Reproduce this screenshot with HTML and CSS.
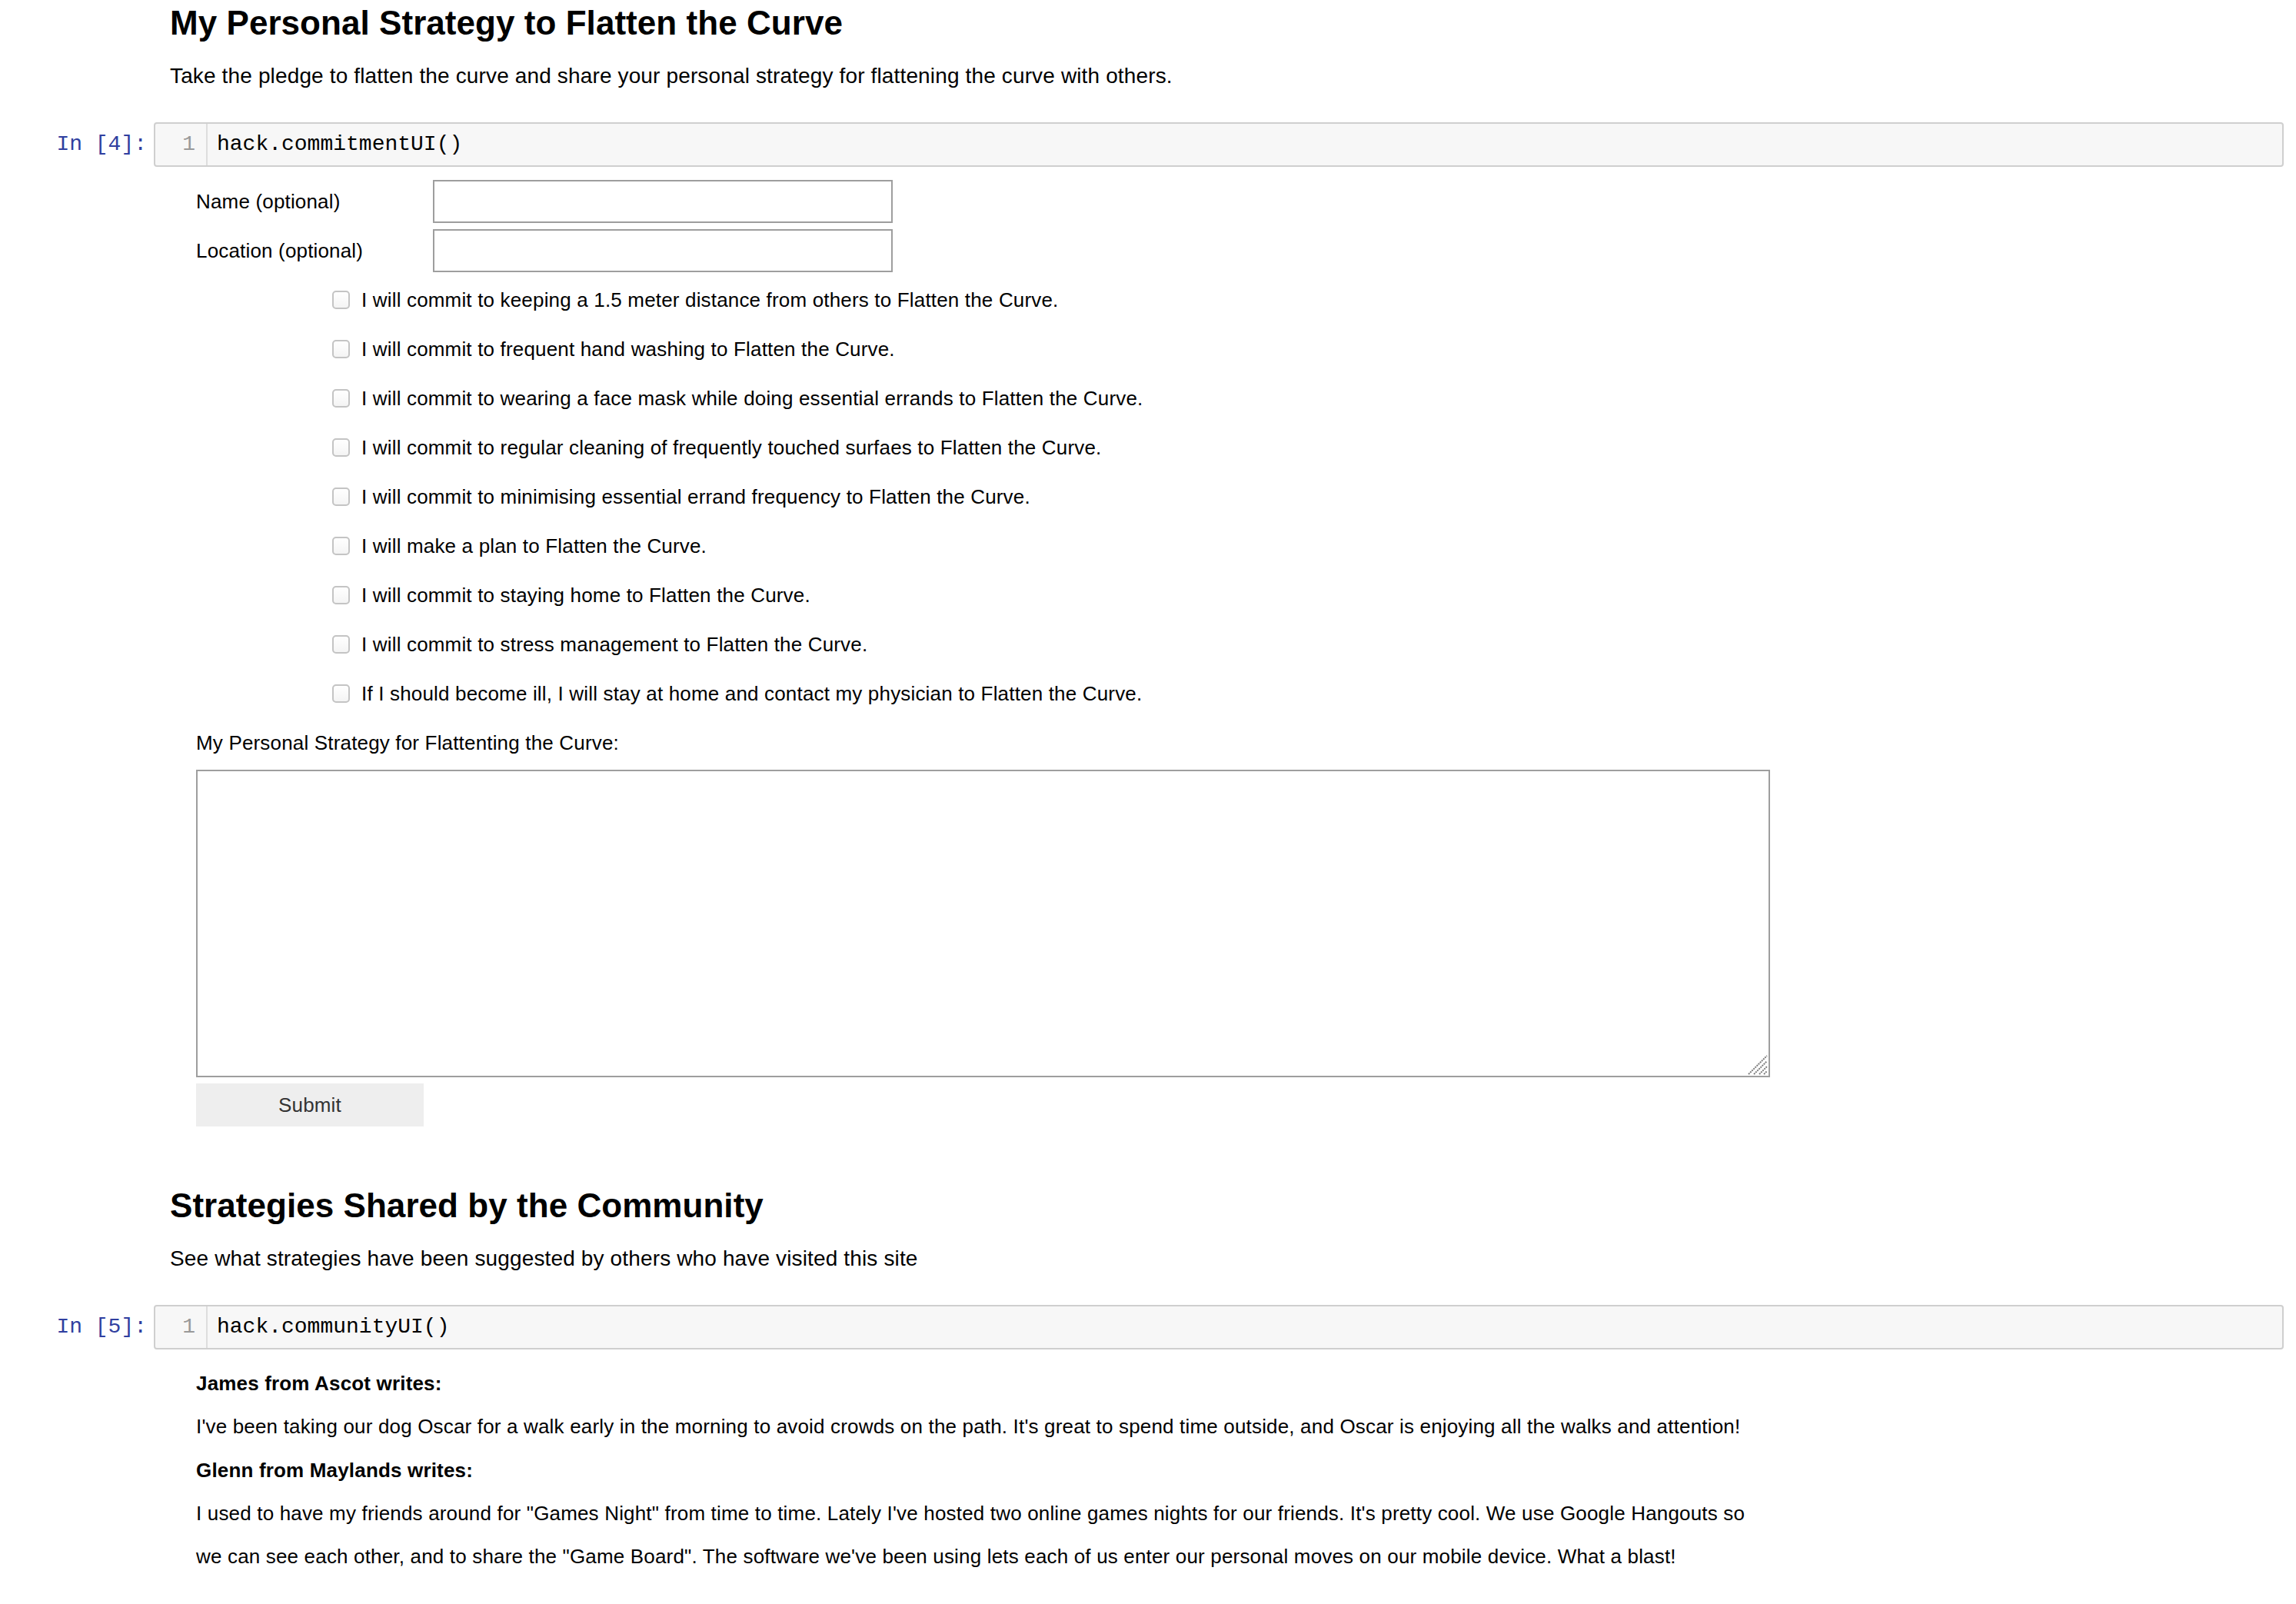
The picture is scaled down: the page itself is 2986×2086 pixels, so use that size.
FILE: index.html
```html
<!DOCTYPE html>
<html lang="en">
<head>
<meta charset="utf-8">
<title>Flatten the Curve</title>
<link rel="stylesheet" href="styles.css">
</head>
<body>
<div class="notebook">
  <section class="md">
    <h2>My Personal Strategy to Flatten the Curve</h2>
    <p class="lead">Take the pledge to flatten the curve and share your personal strategy for flattening the curve with others.</p>
  </section>

  <div class="code-cell">
    <div class="prompt">In&nbsp;[4]:</div>
    <div class="input">
      <div class="gutter">1</div>
      <div class="code">hack.commitmentUI()</div>
    </div>
  </div>

  <div class="output">
    <div class="row">
      <label class="label">Name (optional)</label>
      <input class="text-input" type="text">
    </div>
    <div class="row">
      <label class="label">Location (optional)</label>
      <input class="text-input" type="text">
    </div>
    <label class="row check-row"><input class="check" type="checkbox"><span>I will commit to keeping a 1.5 meter distance from others to Flatten the Curve.</span></label>
    <label class="row check-row"><input class="check" type="checkbox"><span>I will commit to frequent hand washing to Flatten the Curve.</span></label>
    <label class="row check-row"><input class="check" type="checkbox"><span>I will commit to wearing a face mask while doing essential errands to Flatten the Curve.</span></label>
    <label class="row check-row"><input class="check" type="checkbox"><span>I will commit to regular cleaning of frequently touched surfaes to Flatten the Curve.</span></label>
    <label class="row check-row"><input class="check" type="checkbox"><span>I will commit to minimising essential errand frequency to Flatten the Curve.</span></label>
    <label class="row check-row"><input class="check" type="checkbox"><span>I will make a plan to Flatten the Curve.</span></label>
    <label class="row check-row"><input class="check" type="checkbox"><span>I will commit to staying home to Flatten the Curve.</span></label>
    <label class="row check-row"><input class="check" type="checkbox"><span>I will commit to stress management to Flatten the Curve.</span></label>
    <label class="row check-row"><input class="check" type="checkbox"><span>If I should become ill, I will stay at home and contact my physician to Flatten the Curve.</span></label>
    <div class="row">My Personal Strategy for Flattenting the Curve:</div>
    <div class="textarea-wrap">
      <textarea class="strategy"></textarea>
      <svg class="grip" width="26" height="26" viewBox="0 0 26 26" aria-hidden="true">
        <g stroke="#7a7a7a" stroke-width="2" stroke-dasharray="2 1">
          <line x1="1" y1="25" x2="25" y2="1"/>
          <line x1="8" y1="25" x2="25" y2="8"/>
          <line x1="15" y1="25" x2="25" y2="15"/>
          <line x1="21" y1="25" x2="25" y2="21"/>
        </g>
      </svg>
    </div>
    <button class="submit" type="button">Submit</button>
  </div>

  <section class="md md-second">
    <h2>Strategies Shared by the Community</h2>
    <p class="lead">See what strategies have been suggested by others who have visited this site</p>
  </section>

  <div class="code-cell">
    <div class="prompt">In&nbsp;[5]:</div>
    <div class="input">
      <div class="gutter">1</div>
      <div class="code">hack.communityUI()</div>
    </div>
  </div>

  <div class="community">
    <p class="author">James from Ascot writes:</p>
    <p>I've been taking our dog Oscar for a walk early in the morning to avoid crowds on the path. It's great to spend time outside, and Oscar is enjoying all the walks and attention!</p>
    <p class="author">Glenn from Maylands writes:</p>
    <p>I used to have my friends around for "Games Night" from time to time. Lately I've hosted two online games nights for our friends. It's pretty cool. We use Google Hangouts so we can see each other, and to share the "Game Board". The software we've been using lets each of us enter our personal moves on our mobile device. What a blast!</p>
  </div>
</div>
</body>
</html>
```

FILE: styles.css
```css
html, body {
  margin: 0;
  background: #ffffff;
}

body {
  padding: 3px 16px 0 0;
  font-family: "Liberation Sans", Arial, Helvetica, sans-serif;
  color: #000000;
}

.md {
  padding-left: 221px;
}

.md-second {
  margin-top: 76px;
}

.md h2 {
  margin: 0;
  font-size: 44px;
  line-height: 53px;
  font-weight: bold;
  letter-spacing: 0.05px;
}

.lead {
  margin: 23px 0 0;
  font-size: 28px;
  line-height: 40px;
  letter-spacing: 0.14px;
}

.code-cell {
  display: flex;
  align-items: center;
  margin-top: 40px;
}

.prompt {
  width: 200px;
  box-sizing: border-box;
  padding-right: 9px;
  text-align: right;
  font-family: "Liberation Mono", "Courier New", monospace;
  font-size: 28px;
  line-height: 58px;
  color: #303f9f;
}

.input {
  flex: 1;
  display: flex;
  height: 58px;
  box-sizing: border-box;
  border: 2px solid #cfcfcf;
  border-radius: 4px;
  background: #f7f7f7;
  font-family: "Liberation Mono", "Courier New", monospace;
  font-size: 28px;
  line-height: 54px;
}

.gutter {
  width: 68px;
  box-sizing: border-box;
  border-right: 2px solid #dddddd;
  padding-right: 14px;
  text-align: right;
  color: #999999;
}

.code {
  padding-left: 12px;
  color: #000000;
}

.output {
  margin-top: 13px;
  padding-left: 255px;
  font-size: 26px;
  letter-spacing: 0.17px;
}

.row {
  height: 64px;
  display: flex;
  align-items: center;
}

.label {
  width: 308px;
  flex: none;
}

.text-input {
  width: 598px;
  height: 56px;
  box-sizing: border-box;
  margin: 0;
  padding: 0 8px;
  border: 2px solid #9e9e9e;
  border-radius: 0;
  background: #ffffff;
  font: inherit;
  outline: none;
}

.check-row {
  padding-left: 177px;
}

.check {
  appearance: none;
  -webkit-appearance: none;
  width: 23px;
  height: 24px;
  margin: 0 15px 0 0;
  box-sizing: border-box;
  border: 2px solid #c4c4c4;
  border-radius: 5px;
  background: linear-gradient(#ffffff, #f4f4f4);
  flex: none;
}

.textarea-wrap {
  position: relative;
  width: 2047px;
  height: 400px;
  margin: 3px 0 0 0;
}

.strategy {
  display: block;
  width: 100%;
  height: 100%;
  box-sizing: border-box;
  margin: 0;
  border: 2px solid #9e9e9e;
  border-radius: 0;
  resize: none;
  outline: none;
  font: inherit;
  background: #ffffff;
}

.grip {
  position: absolute;
  right: 3px;
  bottom: 3px;
}

.submit {
  display: block;
  width: 296px;
  height: 56px;
  margin: 8px 0 0 0;
  padding: 0;
  border: none;
  border-radius: 0;
  background: #eeeeee;
  color: #333333;
  font-family: inherit;
  font-size: 26px;
  letter-spacing: 0.17px;
}

.community {
  margin-top: 16px;
  padding-left: 255px;
  width: 2040px;
  font-size: 26px;
  line-height: 56.25px;
  letter-spacing: 0.17px;
}

.community p {
  margin: 0;
}

.community .author {
  font-weight: bold;
}
```
